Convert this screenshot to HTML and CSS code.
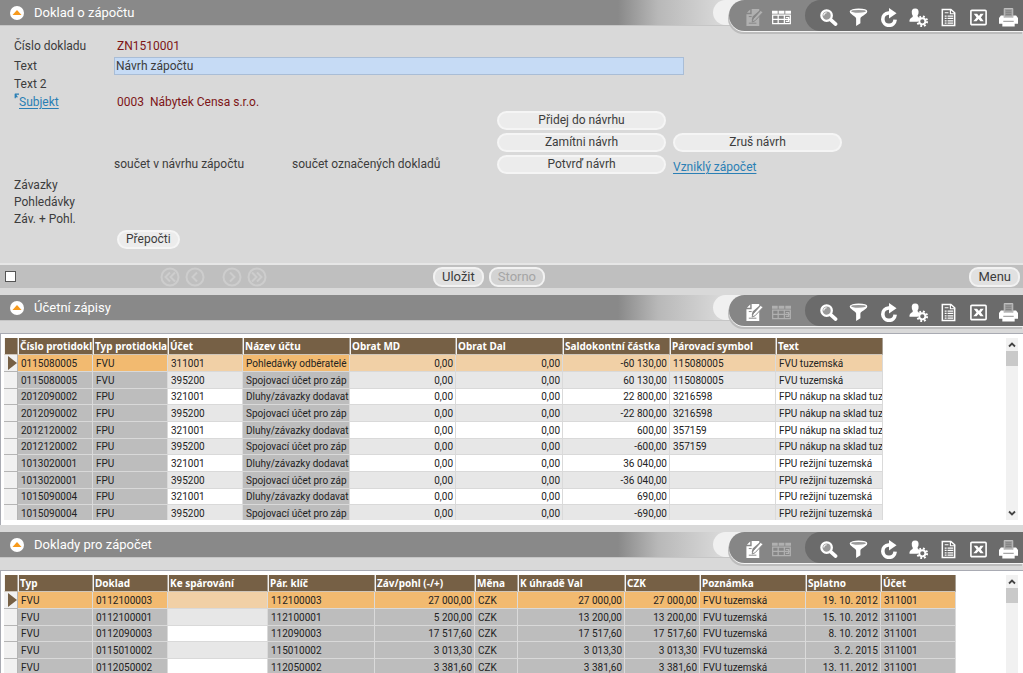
FILE: index.html
```html
<!DOCTYPE html>
<html lang="cs">
<head>
<meta charset="utf-8">
<title>Doklad o zápočtu</title>
<link rel="stylesheet" href="styles.css">
</head>
<body>
<svg class="sprite" aria-hidden="true">
  <symbol id="i-up" viewBox="0 0 14 14"><circle cx="7" cy="7" r="7" fill="#fff"/><path d="M7 4 11.500 9h-9z" fill="#f79a1c"/></symbol>
  <symbol id="i-edit" viewBox="0 0 20 20"><path fill="currentColor" d="M7 1h8v2L8 9l-1 4 4-1 4-4V19H1.500V6.500H7zM5.500 1.500V5H2z"/><path d="M8.500 11.500 16.500 2.500l2.500 2-8.500 9-3 1.200z" fill="currentColor" stroke="#858585"/><path d="M4 9h3M4 16h8" stroke="#858585" fill="none"/></symbol>
  <symbol id="i-grid" viewBox="0 0 20 20"><path fill="currentColor" d="M0 3h6v3H0zM7 3h6v3H7zM14 3h6v3h-6z"/><path fill="none" stroke="currentColor" stroke-width="1.300" d="M.700 7.500h18.600v9H.700zM.700 12h18.600M6.500 7.500v9M13 7.500v9M14.500 10h3v4h-3"/></symbol>
  <symbol id="i-search" viewBox="0 0 20 20"><circle cx="8" cy="8" r="5.500" fill="#999" stroke="currentColor" stroke-width="2.400"/><path d="M5 8a3 3 0 0 1 3-3" fill="none" stroke="#fff" stroke-width="1.200"/><path d="m12.500 12.500 5 4.500" stroke="currentColor" stroke-width="3.800" stroke-linecap="round"/></symbol>
  <symbol id="i-filter" viewBox="0 0 20 20"><path d="M.800 3.500C1 7 7 8.500 7.500 11v8l4.500-3v-5c.500-2.500 7-4 7.200-7.500z" fill="currentColor"/><ellipse cx="10" cy="3.500" rx="8.500" ry="2.200" fill="#999" stroke="currentColor" stroke-width="1.400"/></symbol>
  <symbol id="i-reload" viewBox="0 0 20 20"><path d="M12 5.300h-2a6.500 6.500 0 1 0 7 7" fill="none" stroke="currentColor" stroke-width="3.800"/><path d="m10.500 0 8 5.500-8 5.500z" fill="currentColor"/></symbol>
  <symbol id="i-user" viewBox="0 0 20 20"><path d="M6.500.500c3 0 4 2 3.500 5-.300 1.500-1 2-1 3 0 1.500 2.500 1.500 3 3l-3 3H.500c0-5 3.500-3.500 3.500-6 0-1-1-1.500-1-3-.500-3 .500-5 3.500-5z" fill="currentColor"/><circle cx="14" cy="14" r="5" fill="none" stroke="currentColor" stroke-width="2.200" stroke-dasharray="2 1.930"/><circle cx="14" cy="14" r="3.200" fill="#6b6b6b" stroke="currentColor" stroke-width="2"/></symbol>
  <symbol id="i-doc" viewBox="0 0 20 20"><path d="M3.500 1.500h9l4 3.500v13.500h-13z" fill="none" stroke="currentColor" stroke-width="1.600"/><path d="M12 1v5h5M6 5h4" fill="none" stroke="currentColor" stroke-width="1.200"/><path d="M6 8.500h2m1 0h6M6 11h2m1 0h6M6 13.500h2m1 0h6M6 16h2m1 0h6" stroke="currentColor" stroke-width="1.300"/></symbol>
  <symbol id="i-excel" viewBox="0 0 20 20"><rect x="2" y="2.500" width="16" height="15" rx="1" fill="none" stroke="currentColor" stroke-width="1.700"/><path d="M5 6h3.500L10.500 8.500 12 6h3.500L12.500 10l3 4H12l-2-2.300L8 14H4.500L8 10z" fill="currentColor"/></symbol>
  <symbol id="i-print" viewBox="0 0 20 20"><path d="M5.500.500h9v9h-9z" fill="#a2a2a2" stroke="#c4c4c4"/><path d="M7 3h6M7 5h6M7 7h6" stroke="#7b7b7b"/><path d="M2 8h3v2h10V8h3l2 2.500v6h-3.500v3h-13v-3H0v-6z" fill="currentColor"/><path d="M4.500 14h11" stroke="#8a8a8a"/></symbol>
  <symbol id="i-first" viewBox="0 0 20 20"><circle cx="10" cy="10" r="8.500"/><path d="M10 5.500 5.500 10l4.500 4.500M15 5.500 10.500 10l4.500 4.500"/></symbol>
  <symbol id="i-prev" viewBox="0 0 20 20"><circle cx="10" cy="10" r="8.500"/><path d="M12 5.500 7.500 10l4.500 4.500"/></symbol>
  <symbol id="i-next" viewBox="0 0 20 20"><circle cx="10" cy="10" r="8.500"/><path d="m8 5.500 4.500 4.500L8 14.500"/></symbol>
  <symbol id="i-last" viewBox="0 0 20 20"><circle cx="10" cy="10" r="8.500"/><path d="m5 5.500 4.500 4.500L5 14.500M10 5.500l4.500 4.500-4.500 4.500"/></symbol>
  <symbol id="i-scroll-up" viewBox="0 0 12 12"><path d="m3 8 3-3 3 3" fill="none" stroke="#444" stroke-width="1.800"/></symbol>
  <symbol id="i-scroll-down" viewBox="0 0 12 12"><path d="m3 4 3 3 3-3" fill="none" stroke="#444" stroke-width="1.800"/></symbol>
</svg>

<section class="panel">
  <header class="bar">
    <button class="collapse" aria-label="Sbalit"><svg><use href="#i-up"/></svg></button>
    <h2>Doklad o zápočtu</h2>
    <div class="tools">
      <button class="mode off" aria-label="Upravit"><svg><use href="#i-edit"/></svg></button>
      <button class="mode" aria-label="Tabulka"><svg><use href="#i-grid"/></svg></button>
      <div class="actions">
        <button aria-label="Hledat"><svg><use href="#i-search"/></svg></button>
        <button aria-label="Filtr"><svg><use href="#i-filter"/></svg></button>
        <button aria-label="Obnovit"><svg><use href="#i-reload"/></svg></button>
        <button aria-label="Uživatel"><svg><use href="#i-user"/></svg></button>
        <button aria-label="Sestava"><svg><use href="#i-doc"/></svg></button>
        <button aria-label="Excel"><svg><use href="#i-excel"/></svg></button>
        <button aria-label="Tisk"><svg><use href="#i-print"/></svg></button>
      </div>
    </div>
  </header>
  <form class="form">
    <div class="fields">
      <span>Číslo dokladu</span><output>ZN1510001</output>
      <label for="text">Text</label><input id="text" type="text" value="Návrh zápočtu">
      <span>Text 2</span><span></span>
      <span class="subject"><svg class="jump" viewBox="0 0 6 8"><path d="M1 1h5M1.500 1v5M1.500 1.500 4 5" fill="none" stroke="#2a7fb5" stroke-width="1.500"/></svg><a href="#">Subjekt</a></span><output>0003&nbsp; Nábytek Censa s.r.o.</output>
    </div>
    <div class="proposal">
      <button type="button" class="pill add">Přidej do návrhu</button>
      <button type="button" class="pill reject">Zamítni návrh</button>
      <button type="button" class="pill cancel">Zruš návrh</button>
      <span class="sum">součet v návrhu zápočtu</span>
      <span class="marked">součet označených dokladů</span>
      <button type="button" class="pill confirm">Potvrď návrh</button>
      <a class="created" href="#">Vzniklý zápočet</a>
    </div>
    <div class="totals">
      <span>Závazky</span>
      <span>Pohledávky</span>
      <span>Záv. + Pohl.</span>
    </div>
    <button type="button" class="pill recount">Přepočti</button>
  </form>
  <footer class="foot">
    <input type="checkbox" aria-label="Označit">
    <nav class="pager">
      <button aria-label="První"><svg><use href="#i-first"/></svg></button>
      <button aria-label="Předchozí"><svg><use href="#i-prev"/></svg></button>
      <button class="fwd" aria-label="Další"><svg><use href="#i-next"/></svg></button>
      <button aria-label="Poslední"><svg><use href="#i-last"/></svg></button>
    </nav>
    <button class="cmd">Uložit</button>
    <button class="cmd" disabled>Storno</button>
    <button class="cmd menu">Menu</button>
  </footer>
</section>

<section class="panel">
  <header class="bar">
    <button class="collapse" aria-label="Sbalit"><svg><use href="#i-up"/></svg></button>
    <h2>Účetní zápisy</h2>
    <div class="tools">
      <button class="mode" aria-label="Upravit"><svg><use href="#i-edit"/></svg></button>
      <button class="mode off" aria-label="Tabulka"><svg><use href="#i-grid"/></svg></button>
      <div class="actions">
        <button aria-label="Hledat"><svg><use href="#i-search"/></svg></button>
        <button aria-label="Filtr"><svg><use href="#i-filter"/></svg></button>
        <button aria-label="Obnovit"><svg><use href="#i-reload"/></svg></button>
        <button aria-label="Uživatel"><svg><use href="#i-user"/></svg></button>
        <button aria-label="Sestava"><svg><use href="#i-doc"/></svg></button>
        <button aria-label="Excel"><svg><use href="#i-excel"/></svg></button>
        <button aria-label="Tisk"><svg><use href="#i-print"/></svg></button>
      </div>
    </div>
  </header>
  <div class="sheet entries">
    <div class="view">
    <table>
      <colgroup><col class="mark"><col class="w75" span="3"><col class="w107"><col class="w106"><col class="w107" span="2"><col class="w106"><col class="w107"></colgroup>
      <thead><tr><th></th><th>Číslo protidokl</th><th>Typ protidokla</th><th>Účet</th><th>Název účtu</th><th>Obrat MD</th><th>Obrat Dal</th><th>Saldokontní částka</th><th>Párovací symbol</th><th>Text</th></tr></thead>
      <tbody>
        <tr class="current"><td></td><td class="ro">0115080005</td><td class="ro">FVU</td><td>311001</td><td class="ro">Pohledávky odběratelé</td><td class="num">0,00</td><td class="num">0,00</td><td class="num">-60 130,00</td><td>115080005</td><td>FVU tuzemská</td></tr>
        <tr><td></td><td class="ro">0115080005</td><td class="ro">FVU</td><td>395200</td><td class="ro">Spojovací účet pro záp</td><td class="num">0,00</td><td class="num">0,00</td><td class="num">60 130,00</td><td>115080005</td><td>FVU tuzemská</td></tr>
        <tr><td></td><td class="ro">2012090002</td><td class="ro">FPU</td><td>321001</td><td class="ro">Dluhy/závazky dodavat</td><td class="num">0,00</td><td class="num">0,00</td><td class="num">22 800,00</td><td>3216598</td><td>FPU nákup na sklad tuz</td></tr>
        <tr><td></td><td class="ro">2012090002</td><td class="ro">FPU</td><td>395200</td><td class="ro">Spojovací účet pro záp</td><td class="num">0,00</td><td class="num">0,00</td><td class="num">-22 800,00</td><td>3216598</td><td>FPU nákup na sklad tuz</td></tr>
        <tr><td></td><td class="ro">2012120002</td><td class="ro">FPU</td><td>321001</td><td class="ro">Dluhy/závazky dodavat</td><td class="num">0,00</td><td class="num">0,00</td><td class="num">600,00</td><td>357159</td><td>FPU nákup na sklad tuz</td></tr>
        <tr><td></td><td class="ro">2012120002</td><td class="ro">FPU</td><td>395200</td><td class="ro">Spojovací účet pro záp</td><td class="num">0,00</td><td class="num">0,00</td><td class="num">-600,00</td><td>357159</td><td>FPU nákup na sklad tuz</td></tr>
        <tr><td></td><td class="ro">1013020001</td><td class="ro">FPU</td><td>321001</td><td class="ro">Dluhy/závazky dodavat</td><td class="num">0,00</td><td class="num">0,00</td><td class="num">36 040,00</td><td></td><td>FPU režijní tuzemská</td></tr>
        <tr><td></td><td class="ro">1013020001</td><td class="ro">FPU</td><td>395200</td><td class="ro">Spojovací účet pro záp</td><td class="num">0,00</td><td class="num">0,00</td><td class="num">-36 040,00</td><td></td><td>FPU režijní tuzemská</td></tr>
        <tr><td></td><td class="ro">1015090004</td><td class="ro">FPU</td><td>321001</td><td class="ro">Dluhy/závazky dodavat</td><td class="num">0,00</td><td class="num">0,00</td><td class="num">690,00</td><td></td><td>FPU režijní tuzemská</td></tr>
        <tr><td></td><td class="ro">1015090004</td><td class="ro">FPU</td><td>395200</td><td class="ro">Spojovací účet pro záp</td><td class="num">0,00</td><td class="num">0,00</td><td class="num">-690,00</td><td></td><td>FPU režijní tuzemská</td></tr>
      </tbody>
    </table>
    </div>
    <div class="scroll"><svg><use href="#i-scroll-up"/></svg><div class="thumb"></div><svg class="down"><use href="#i-scroll-down"/></svg></div>
  </div>
</section>

<section class="panel last">
  <header class="bar">
    <button class="collapse" aria-label="Sbalit"><svg><use href="#i-up"/></svg></button>
    <h2>Doklady pro zápočet</h2>
    <div class="tools">
      <button class="mode" aria-label="Upravit"><svg><use href="#i-edit"/></svg></button>
      <button class="mode off" aria-label="Tabulka"><svg><use href="#i-grid"/></svg></button>
      <div class="actions">
        <button aria-label="Hledat"><svg><use href="#i-search"/></svg></button>
        <button aria-label="Filtr"><svg><use href="#i-filter"/></svg></button>
        <button aria-label="Obnovit"><svg><use href="#i-reload"/></svg></button>
        <button aria-label="Uživatel"><svg><use href="#i-user"/></svg></button>
        <button aria-label="Sestava"><svg><use href="#i-doc"/></svg></button>
        <button aria-label="Excel"><svg><use href="#i-excel"/></svg></button>
        <button aria-label="Tisk"><svg><use href="#i-print"/></svg></button>
      </div>
    </div>
  </header>
  <div class="sheet">
    <div class="view">
    <table>
      <colgroup><col class="mark"><col class="w75" span="2"><col class="w100"><col class="w107"><col class="w100"><col class="w43"><col class="w107"><col class="w75"><col class="w106"><col class="w75" span="2"></colgroup>
      <thead><tr><th></th><th>Typ</th><th>Doklad</th><th>Ke spárování</th><th>Pár. klíč</th><th>Záv/pohl (-/+)</th><th>Měna</th><th>K úhradě Val</th><th>CZK</th><th>Poznámka</th><th>Splatno</th><th>Účet</th></tr></thead>
      <tbody>
        <tr class="current"><td></td><td class="ro">FVU</td><td class="ro">0112100003</td><td></td><td class="ro">112100003</td><td class="ro num">27 000,00</td><td class="ro">CZK</td><td class="ro num">27 000,00</td><td class="ro num">27 000,00</td><td class="ro">FVU tuzemská</td><td class="ro num">19. 10. 2012</td><td class="ro">311001</td></tr>
        <tr><td></td><td class="ro">FVU</td><td class="ro">0112100001</td><td></td><td class="ro">112100001</td><td class="ro num">5 200,00</td><td class="ro">CZK</td><td class="ro num">13 200,00</td><td class="ro num">13 200,00</td><td class="ro">FVU tuzemská</td><td class="ro num">15. 10. 2012</td><td class="ro">311001</td></tr>
        <tr><td></td><td class="ro">FVU</td><td class="ro">0112090003</td><td></td><td class="ro">112090003</td><td class="ro num">17 517,60</td><td class="ro">CZK</td><td class="ro num">17 517,60</td><td class="ro num">17 517,60</td><td class="ro">FVU tuzemská</td><td class="ro num">8. 10. 2012</td><td class="ro">311001</td></tr>
        <tr><td></td><td class="ro">FVU</td><td class="ro">0115010002</td><td></td><td class="ro">115010002</td><td class="ro num">3 013,30</td><td class="ro">CZK</td><td class="ro num">3 013,30</td><td class="ro num">3 013,30</td><td class="ro">FVU tuzemská</td><td class="ro num">3. 2. 2015</td><td class="ro">311001</td></tr>
        <tr><td></td><td class="ro">FVU</td><td class="ro">0112050002</td><td></td><td class="ro">112050002</td><td class="ro num">3 381,60</td><td class="ro">CZK</td><td class="ro num">3 381,60</td><td class="ro num">3 381,60</td><td class="ro">FVU tuzemská</td><td class="ro num">13. 11. 2012</td><td class="ro">311001</td></tr>
      </tbody>
    </table>
    </div>
    <div class="scroll"><svg><use href="#i-scroll-up"/></svg><div class="thumb"></div></div>
  </div>
</section>
</body>
</html>
```

FILE: styles.css
```css
* { box-sizing: border-box; }

body {
  margin: 0;
  height: 100vh;
  overflow: hidden;
  display: flex;
  flex-direction: column;
  gap: 7px;
  background: #d9d9d9;
  color: #3c3c3c;
  font: 12px/18px Roboto, "Noto Sans", sans-serif;
}

.sprite { display: none; }

button {
  margin: 0;
  padding: 0;
  border: 0;
  background: none;
  color: inherit;
  font: inherit;
}

a { color: #2a7fb5; text-decoration: underline; text-underline-offset: 2px; }

.panel { flex: none; display: flex; flex-direction: column; }
.panel.last { flex: 1; min-height: 0; }

/* Panel title bar with its toolbar */
.bar {
  height: 26px;
  display: flex;
  align-items: flex-start;
  background: linear-gradient(90deg, #898989 calc(100% - 405px), #b8b8b8 calc(100% - 365px), #dadada calc(100% - 300px));
  border-bottom: 1px solid #c6c6c6;
}

.collapse { display: flex; margin: 6px 10px 0; }
.collapse svg { width: 14px; height: 14px; }

.bar h2 {
  margin: 0;
  color: #fff;
  font-size: 13px;
  font-weight: 400;
  line-height: 26px;
}

.tools {
  margin-left: auto;
  height: 31px;
  display: flex;
  align-items: center;
  padding-left: 12px;
  border-radius: 16px 0 0 16px;
  background: #868686;
  box-shadow: 0 1px 0 #f4f4f4, -1px 3px 0 #bcbcbc, -19px -3px 0 -3px #f0f0f0;
  color: #fff;
}

.tools button { display: flex; justify-content: center; padding-top: 3px; }
.tools svg { width: 19px; height: 19px; }
.tools .mode { width: 27px; }
.tools .off { color: #b0b0b0; }

.actions {
  height: 31px;
  display: flex;
  align-items: center;
  margin-left: 10px;
  padding-left: 8px;
  border-radius: 16px 0 0 16px;
  background: #6b6b6b;
}
.actions button { width: 30px; }

/* Document form */
.form { padding: 11px 14px 14px; }

.fields {
  display: grid;
  grid-template-columns: 100px minmax(0, 570px);
  grid-template-rows: 20px;
  grid-auto-rows: 18px;
}
.fields output { padding-left: 3px; color: #7d1517; }
.fields input {
  width: 100%;
  height: 18px;
  padding: 0 1px;
  border: 1px solid #a9bdd6;
  background: #c6dbf5;
  color: #3c3c3c;
  font: inherit;
}
.subject { display: flex; }
.jump { width: 5px; height: 7px; }

.proposal {
  display: grid;
  grid-template-columns: 171px 198px 169px 169px;
  grid-auto-rows: 19px;
  gap: 3px 7px;
  padding-left: 100px;
}
.add { grid-area: 1 / 3; }
.reject { grid-area: 2 / 3; }
.cancel { grid-area: 2 / 4; }
.sum { grid-area: 3 / 1; }
.marked { grid-area: 3 / 2; }
.confirm { grid-area: 3 / 3; }
.created { grid-area: 3 / 4; padding-top: 3px; }

.pill {
  height: 19px;
  border: 2px solid #f5f5f5;
  border-radius: 10px;
  background: #ececec;
  line-height: 15px;
}

.totals { display: grid; grid-auto-rows: 17px; margin-top: 2px; }
.recount { margin: 3px 0 0 103px; padding: 0 7px; display: block; }

/* Command strip */
.foot {
  height: 25px;
  display: flex;
  align-items: center;
  padding: 0 3px 0 5px;
  border-top: 2px solid #e6e6e6;
  background: #bfbfbf;
}
.foot input {
  appearance: none;
  width: 11px;
  height: 11px;
  margin: 0;
  border: 1px solid #555;
  background: #fff;
}
.pager { display: flex; gap: 5px; margin: 0 166px 0 144px; }
.pager .fwd { margin-left: 12px; }
.pager button { display: flex; }
.pager svg { width: 20px; height: 20px; fill: none; stroke: #cdcdcd; stroke-width: 2; }

.cmd {
  height: 20px;
  margin-right: 5px;
  padding: 0 7px;
  border: 2px solid #f2f2f2;
  border-radius: 9px;
  background: #e1e1e1;
  font-size: 13px;
  line-height: 16px;
}
.cmd:disabled { color: #a5a5a5; background: #d3d3d3; }
.cmd.menu { margin: 0 0 0 auto; }

/* Data grids */
.sheet {
  display: flex;
  margin-top: 12px;
  padding: 4px 5px 5px 3px;
  border: 1px solid #a9abb3;
  border-width: 1px 0 0 1px;
  background: #fff;
}
.entries { height: 192px; }
.last .sheet { flex: 1; min-height: 0; padding-bottom: 0; }
.view { flex: 1; min-width: 0; overflow: hidden; }

table {
  table-layout: fixed;
  width: 0;
  border-collapse: separate;
  border-spacing: 0;
  color: #222;
  font-size: 10px;
  line-height: 15px;
}
.mark { width: 14px; }
.w43 { width: 43px; }
.w75 { width: 75px; }
.w100 { width: 100px; }
.w106 { width: 106px; }
.w107 { width: 107px; }

th, td {
  height: 17px;
  padding: 0 2px;
  overflow: hidden;
  white-space: nowrap;
  text-align: left;
}
th {
  padding: 0 1px;
  border-right: 1px solid #a8a095;
  border-left: 1px solid #f4f2ee;
  border-bottom: 1px solid #cfc6ba;
  background: #766045;
  color: #fff;
  font-family: "Noto Sans", sans-serif;
  font-weight: 700;
}
td { padding-left: 3px; border-right: 1px solid #dadada; border-bottom: 1px solid #d9d9d9; }
tr:nth-child(3n) td { height: 16px; line-height: 14px; }
tr:nth-child(even) td { background: #e7e7e7; }
tr td.ro, tr:nth-child(even) td.ro { background: #bdbdbd; }
tr.current td { background: #f1d0a6; }
tr.current td.ro { background: #f2ba70; }
.num { text-align: right; }

tbody td:first-child,
tbody tr:nth-child(even) td:first-child,
tbody tr.current td:first-child {
  padding: 0;
  border-right-color: #b5b5b5;
  border-bottom-color: #b5b5b5;
  background: #f1f1f1;
}
.current td:first-child::before {
  content: "";
  display: block;
  width: 0;
  margin-left: 4px;
  border: 7px solid transparent;
  border-left: 9px solid #766045;
  border-right: 0;
}

.scroll {
  width: 12px;
  display: flex;
  flex-direction: column;
  background: #f1f1f1;
}
.scroll svg { width: 12px; height: 13px; }
.scroll .down { margin-top: auto; }
.thumb { height: 15px; background: #c9c9c9; }
```
